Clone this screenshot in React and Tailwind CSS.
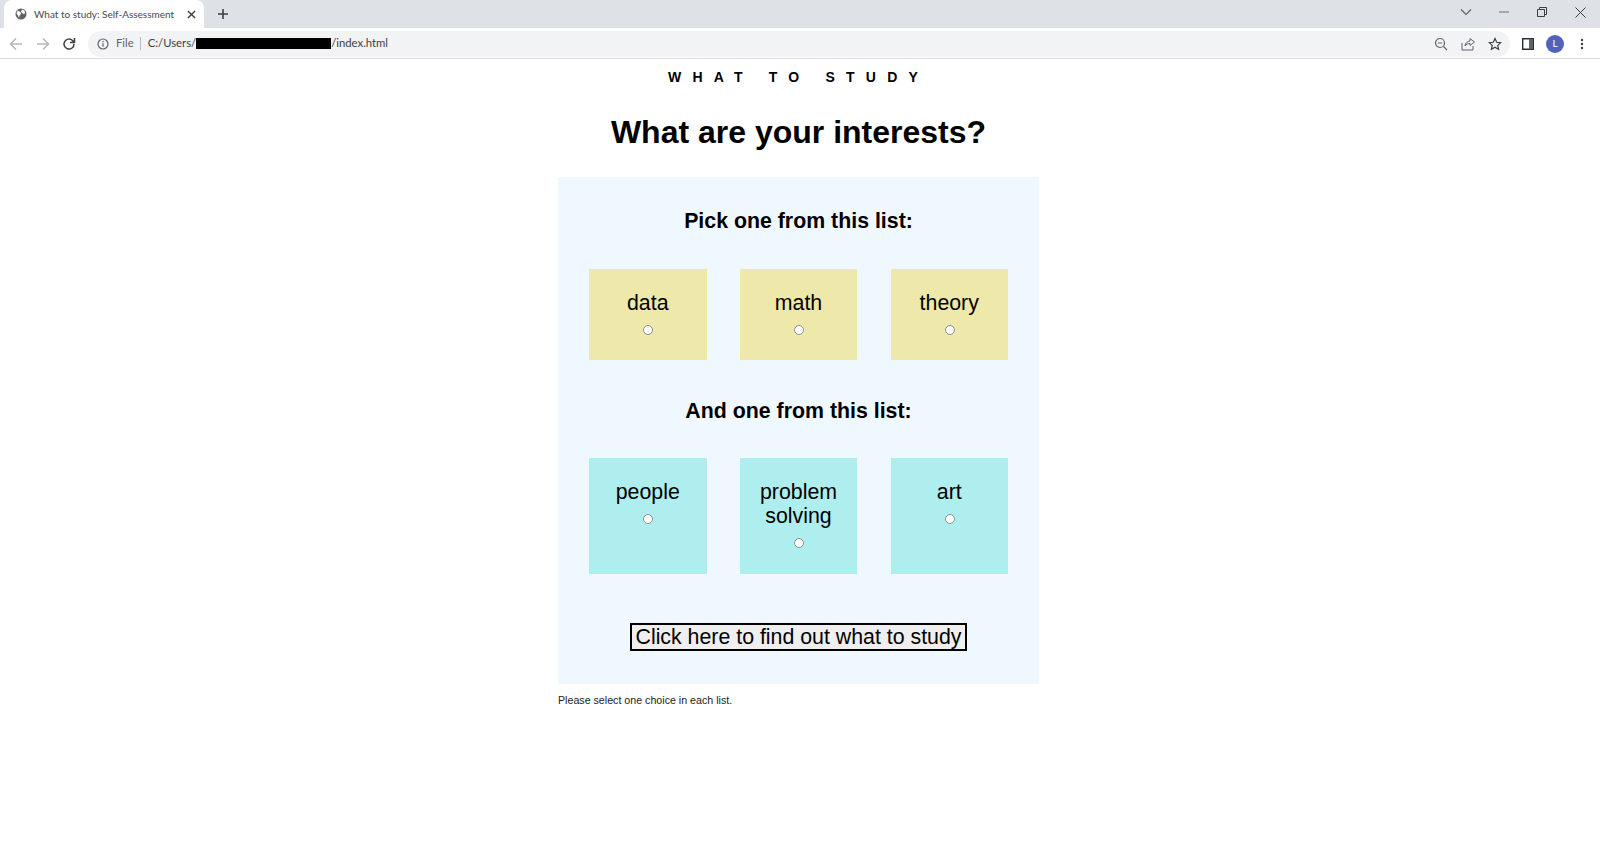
import React from "react";

const sans = "font-['Liberation_Sans',Arial,sans-serif]";

function Radio() {
  return <span className="block w-[8px] h-[8px] box-content rounded-full bg-white border border-[#8f8f8f] mx-auto" />;
}

function Card({ color, label, h }) {
  return (
    <div className={`w-[117.5px] ${h} ${color} pt-[22px] flex flex-col items-center`}>
      <div className="text-[21.33px] leading-[24px] text-black text-center w-[90px]">{label}</div>
      <div className="mt-[9.5px] ml-[1px]"><Radio /></div>
    </div>
  );
}

function Chrome() {
  return (
    <div className="font-['Lato',sans-serif]">
      <div className="h-[28px] bg-[#dee1e6] flex items-end relative">
        <div className="ml-[4px] w-[200px] h-[28px] bg-white rounded-t-[8px] flex items-center pl-[11px]">
          <svg width="12" height="12" viewBox="0 0 24 24" className="shrink-0">
            <circle cx="12" cy="12" r="11" fill="#5f6368" />
            <path d="M5 5l6 3 1 4-3 3-1 5-2-5-3-4zM14 3l5 2 1 6-3 1-3-2-2-3z" fill="#fff" />
          </svg>
          <span className="ml-[7px] text-[10px] text-[#45494f] whitespace-nowrap w-[148px]">What to study: Self-Assessment</span>
          <svg width="9" height="9" viewBox="0 0 10 10" className="ml-[5px]"><path d="M1 1l8 8M9 1l-8 8" stroke="#3c4043" strokeWidth="1.6" /></svg>
        </div>
        <svg width="12" height="12" viewBox="0 0 12 12" className="ml-[13px] mb-[8px]"><path d="M6 1v10M1 6h10" stroke="#3c4043" strokeWidth="1.6" /></svg>
        <div className="ml-auto flex items-center h-[28px] pb-[4px]">
          <svg width="12" height="8" viewBox="0 0 12 8" className="mr-[27px]"><path d="M1 1.5l5 5 5-5" fill="none" stroke="#5f6368" strokeWidth="1.2" /></svg>
          <svg width="10" height="2" viewBox="0 0 10 2" className="mr-[28px]"><path d="M0 1h10" stroke="#6b6f74" strokeWidth="1" /></svg>
          <svg width="10" height="10" viewBox="0 0 10 10" className="mr-[28px]"><path d="M.5 2.5h7v7h-7zM2.5 2.5v-2h7v7h-2" fill="none" stroke="#3c4043" strokeWidth="1" /></svg>
          <svg width="11" height="11" viewBox="0 0 11 11" className="mr-[14px]"><path d="M.5.5l10 10M10.500.5l-10 10" stroke="#3c4043" strokeWidth="1" /></svg>
        </div>
      </div>
      <div className="h-[31px] pt-px bg-white border-b border-[#dadce0] flex items-center">
        <svg width="14" height="14" viewBox="0 0 14 14" className="ml-[9px]"><path d="M13 7H2M7 1.500L1.500 7 7 12.500" fill="none" stroke="#b4b7bb" strokeWidth="1.500" /></svg>
        <svg width="14" height="14" viewBox="0 0 14 14" className="ml-[13px]"><path d="M1 7h11M7 1.500L12.500 7 7 12.500" fill="none" stroke="#b4b7bb" strokeWidth="1.500" /></svg>
        <svg width="14" height="14" viewBox="0 0 14 14" className="ml-[12px]"><path d="M12 7a5 5 0 1 1-1.500-3.500L12.500 5.500M12.500 1v4.500H8" fill="none" stroke="#3c4043" strokeWidth="1.500" /></svg>
        <div className="ml-[12px] w-[1422px] h-[26px] rounded-full bg-[#f1f3f4] flex items-center pl-[9px] text-[11.3px] text-[#5f6368]">
          <svg width="12" height="12" viewBox="0 0 12 12"><circle cx="6" cy="6" r="5" fill="none" stroke="#5f6368" strokeWidth="1.200" /><path d="M6 5.200v3.600M6 3v1.300" stroke="#5f6368" strokeWidth="1.200" /></svg>
          <span className="ml-[7px]">File</span>
          <span className="ml-[6px] w-px h-[13px] bg-[#b8babd]" />
          <span className="ml-[7px] text-[#3c4043]">C:/Users/</span>
          <span className="w-[135px] h-[11px] bg-black" />
          <span className="text-[#3c4043]">/index.html</span>
          <div className="ml-auto flex items-center mr-[8px]">
            <svg width="14" height="14" viewBox="0 0 14 14"><circle cx="6" cy="6" r="4.500" fill="none" stroke="#5f6368" strokeWidth="1.200" /><path d="M3.800 6h4.400M9.500 9.500L13 13" stroke="#5f6368" strokeWidth="1.200" /></svg>
            <svg width="14" height="14" viewBox="0 0 14 14" className="ml-[13px]"><path d="M1 6v7h11v-4M4 9c0-3 3-5 5-5V1.500L13.500 5 9 8.500V6.500c-2 0-4 .8-5 2.500z" fill="none" stroke="#5f6368" strokeWidth="1" /></svg>
            <svg width="14" height="14" viewBox="0 0 14 14" className="ml-[13px]"><path d="M7 1.500l1.700 3.800 4 .4-3 2.700.9 4L7 10.300l-3.600 2.100.9-4-3-2.700 4-.4z" fill="none" stroke="#3c4043" strokeWidth="1.200" /></svg>
          </div>
        </div>
        <svg width="12" height="12" viewBox="0 0 12 12" className="ml-[12px]"><path d="M.7.700h10.600v10.600H.7z" fill="#fff" stroke="#2b2e33" strokeWidth="1.400" /><rect x="7" y="1" width="4" height="10" fill="#5f6368" /></svg>
        <div className="ml-[12px] w-[18px] h-[18px] rounded-full bg-[#5262b8] text-white text-[10px] flex items-center justify-center">L</div>
        <svg width="4" height="12" viewBox="0 0 4 12" className="ml-[16px]"><circle cx="2" cy="2" r="1.200" fill="#3c4043" /><circle cx="2" cy="6" r="1.200" fill="#3c4043" /><circle cx="2" cy="10" r="1.200" fill="#3c4043" /></svg>
      </div>
    </div>
  );
}

export default function App() {
  return (
    <div className={`h-[862px] bg-white overflow-hidden ${sans}`}>
      <Chrome />
      <div className="w-[481px] ml-[558px]">
        <div className="pt-[10px] h-[18px] box-content text-center font-bold text-[14px] leading-[16px] tracking-[0.8em] whitespace-nowrap text-black flex justify-center">WHAT TO STUDY</div>
        <h1 className="mt-[27px] text-center font-bold text-[32px] leading-[37px] text-black">What are your interests?</h1>
        <div className="mt-[26px] h-[507px] bg-[#f0f8ff] px-[31px] pt-[32px]">
          <h2 className="text-center font-bold text-[21.33px] leading-[25px] text-black">Pick one from this list:</h2>
          <div className="mt-[35px] flex justify-between">
            <Card color="bg-[#eee8aa]" label="data" h="h-[91px]" />
            <Card color="bg-[#eee8aa]" label="math" h="h-[91px]" />
            <Card color="bg-[#eee8aa]" label="theory" h="h-[91px]" />
          </div>
          <h2 className="mt-[39px] text-center font-bold text-[21.33px] leading-[25px] text-black">And one from this list:</h2>
          <div className="mt-[34px] flex justify-between">
            <Card color="bg-[#afeeee]" label="people" h="h-[116px]" />
            <Card color="bg-[#afeeee]" label="problem solving" h="h-[116px]" />
            <Card color="bg-[#afeeee]" label="art" h="h-[116px]" />
          </div>
          <div className="mt-[49px] flex justify-center">
            <button className="h-[28px] w-[337px] border-2 border-black bg-[#efefef] text-[21.33px] leading-[24px] text-black whitespace-nowrap">Click here to find out what to study</button>
          </div>
        </div>
        <p className="mt-[10px] text-[10.67px] leading-[13px] text-[#222]">Please select one choice in each list.</p>
      </div>
    </div>
  );
}
